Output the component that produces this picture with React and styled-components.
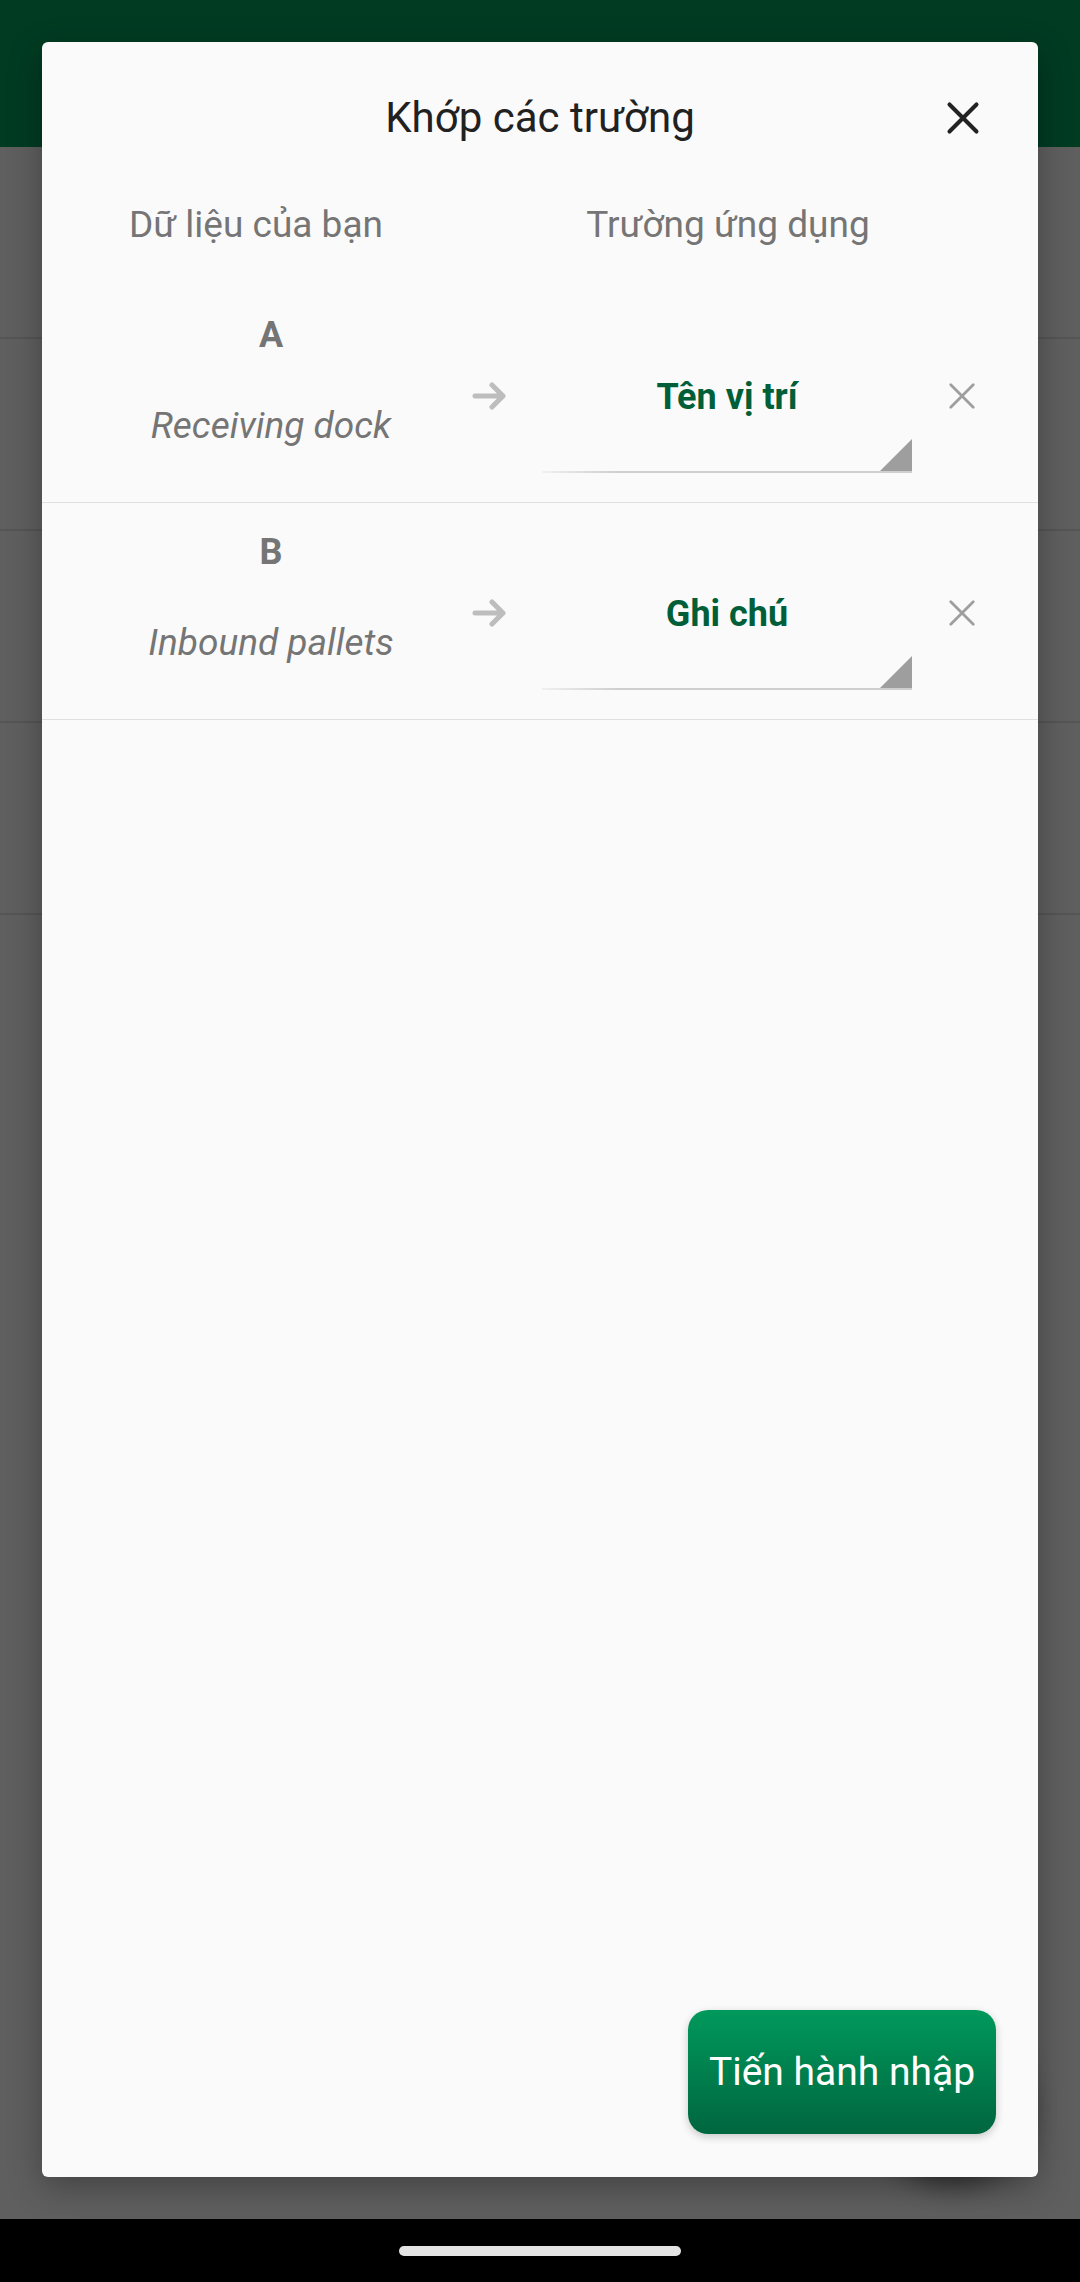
import styled, { createGlobalStyle } from 'styled-components';

const GlobalStyle = createGlobalStyle`
  html, body {
    margin: 0;
    padding: 0;
  }
  body {
    font-family: Roboto, "Noto Sans", "Liberation Sans", sans-serif;
    background: #000000;
  }
  * {
    box-sizing: border-box;
  }
`;

const mappings = [
    { letter: 'A', sample: 'Receiving dock', field: 'Tên vị trí' },
    { letter: 'B', sample: 'Inbound pallets', field: 'Ghi chú' },
];

const CloseIcon = ({ size, stroke }) => (
    <svg width={size} height={size} viewBox="0 0 32 32" fill="none">
        <path d="M4 4 L28 28 M28 4 L4 28" stroke="currentColor" strokeWidth={stroke} strokeLinecap="round" />
    </svg>
);

const ArrowIcon = () => (
    <svg width="36" height="28" viewBox="0 0 36 28" fill="none">
        <path
            d="M3 14 H31 M20 3 L31 14 L20 25"
            stroke="currentColor"
            strokeWidth="5"
            strokeLinecap="round"
            strokeLinejoin="round"
        />
    </svg>
);

const App = () => {
    return (
        <>
            <GlobalStyle />
            <Screen>
                <Stage>
                    <AppBar />
                    <ListRow />
                    <ListRow />
                    <ListRow />
                    <ListRow />
                    <Fab />
                    <Scrim>
                        <Dialog>
                            <TitleBar>
                                <span />
                                <Title>Khớp các trường</Title>
                                <CloseButton aria-label="Đóng">
                                    <CloseIcon size={36} stroke={3.6} />
                                </CloseButton>
                            </TitleBar>
                            <ColumnHeaders>
                                <ColumnLabel>Dữ liệu của bạn</ColumnLabel>
                                <ColumnLabel>Trường ứng dụng</ColumnLabel>
                            </ColumnHeaders>
                            {mappings.map((m) => (
                                <MappingRow key={m.letter}>
                                    <SourceCell>
                                        <ColumnLetter>{m.letter}</ColumnLetter>
                                        <SampleValue>{m.sample}</SampleValue>
                                    </SourceCell>
                                    <ArrowCell>
                                        <ArrowIcon />
                                    </ArrowCell>
                                    <FieldSelect>
                                        <SelectValue>{m.field}</SelectValue>
                                    </FieldSelect>
                                    <RemoveButton aria-label="Xóa">
                                        <CloseIcon size={30} stroke={3} />
                                    </RemoveButton>
                                </MappingRow>
                            ))}
                            <Footer>
                                <ImportButton>Tiến hành nhập</ImportButton>
                            </Footer>
                        </Dialog>
                    </Scrim>
                </Stage>
                <NavBar>
                    <HomeHandle />
                </NavBar>
            </Screen>
        </>
    );
}

const Screen = styled.div`
    width: 1080px;
    height: 2282px;
    display: flex;
    flex-direction: column;
    overflow: hidden;
`

const Stage = styled.div`
    position: relative;
    height: 2219px;
    background: #ffffff;
    overflow: hidden;
`

const AppBar = styled.div`
    height: 147px;
    background: #009e5b;
`

const ListRow = styled.div`
    height: 192px;
    border-bottom: 2px solid #e4e4e4;
`

const Fab = styled.div`
    position: absolute;
    left: 878px;
    top: 2020px;
    width: 150px;
    height: 150px;
    border-radius: 50%;
    background: #009e5b;
    box-shadow: 0 14px 30px rgba(0, 0, 0, 0.55);
`

const Scrim = styled.div`
    position: absolute;
    inset: 0;
    background: rgba(0, 0, 0, 0.627);
    display: flex;
    justify-content: center;
    padding-top: 42px;
`

const Dialog = styled.div`
    width: 996px;
    height: 2135px;
    background: #fafafa;
    border-radius: 6px;
    display: flex;
    flex-direction: column;
    box-shadow: 0 10px 34px rgba(0, 0, 0, 0.3);
`

const TitleBar = styled.div`
    display: grid;
    grid-template-columns: 1fr auto 1fr;
    align-items: center;
    padding-top: 52px;
`

const Title = styled.h2`
    margin: 0;
    font-size: 42px;
    line-height: 48px;
    font-weight: 400;
    color: #212121;
`

const CloseButton = styled.button`
    justify-self: end;
    margin-right: 53px;
    width: 44px;
    height: 44px;
    padding: 0;
    border: none;
    background: none;
    color: #222222;
    display: flex;
    align-items: center;
    justify-content: center;
`

const ColumnHeaders = styled.div`
    display: grid;
    grid-template-columns: 348px 372px;
    column-gap: 112px;
    padding: 61px 0 39px 40px;
`

const ColumnLabel = styled.div`
    text-align: center;
    font-size: 37px;
    line-height: 44px;
    color: #757575;
`

const MappingRow = styled.div`
    display: grid;
    grid-template-columns: 378px 82px 370px 100px;
    align-items: start;
    height: 217px;
    padding-left: 40px;
    border-bottom: 1px solid #e0e0e0;
`

const SourceCell = styled.div`
    display: flex;
    flex-direction: column;
    align-items: center;
    gap: 48px;
    padding-top: 28px;
    color: #757575;
`

const ColumnLetter = styled.div`
    font-size: 36px;
    line-height: 42px;
    font-weight: 700;
`

const SampleValue = styled.div`
    font-size: 37px;
    line-height: 44px;
    font-style: italic;
`

const ArrowCell = styled.div`
    width: 60px;
    display: flex;
    justify-content: center;
    padding-top: 96px;
    color: #bdbdbd;
`

const FieldSelect = styled.div`
    position: relative;
    margin-top: 89px;
    height: 98px;
    padding-bottom: 52px;

    &::after {
        content: '';
        position: absolute;
        left: 0;
        right: 0;
        bottom: 0;
        height: 2px;
        background: linear-gradient(to right, rgba(200, 200, 200, 0.2), #cfcfcf 20%, #cfcfcf);
    }

    &::before {
        content: '';
        position: absolute;
        right: 0;
        bottom: 2px;
        width: 32px;
        height: 32px;
        background: #9e9e9e;
        clip-path: polygon(100% 0, 100% 100%, 0 100%);
    }
`

const SelectValue = styled.div`
    text-align: center;
    font-size: 36px;
    line-height: 44px;
    font-weight: 700;
    color: #005f38;
`

const RemoveButton = styled.button`
    justify-self: center;
    margin-top: 95px;
    width: 30px;
    height: 30px;
    padding: 0;
    border: none;
    background: none;
    color: #9e9e9e;
    display: flex;
`

const Footer = styled.div`
    margin-top: auto;
    display: flex;
    justify-content: flex-end;
    padding: 0 42px 43px 0;
`

const ImportButton = styled.button`
    width: 308px;
    height: 124px;
    border: none;
    border-radius: 20px;
    background: linear-gradient(to bottom, #00995c, #00663f);
    color: #ffffff;
    font-family: Roboto, "Noto Sans", sans-serif;
    font-size: 39px;
    font-weight: 400;
    box-shadow: 0 3px 8px rgba(0, 0, 0, 0.2);
`

const NavBar = styled.div`
    height: 63px;
    background: #000000;
    display: flex;
    justify-content: center;
    padding-top: 27px;
`

const HomeHandle = styled.div`
    width: 282px;
    height: 10px;
    border-radius: 5px;
    background: #e4e4e4;
`

export default App;
